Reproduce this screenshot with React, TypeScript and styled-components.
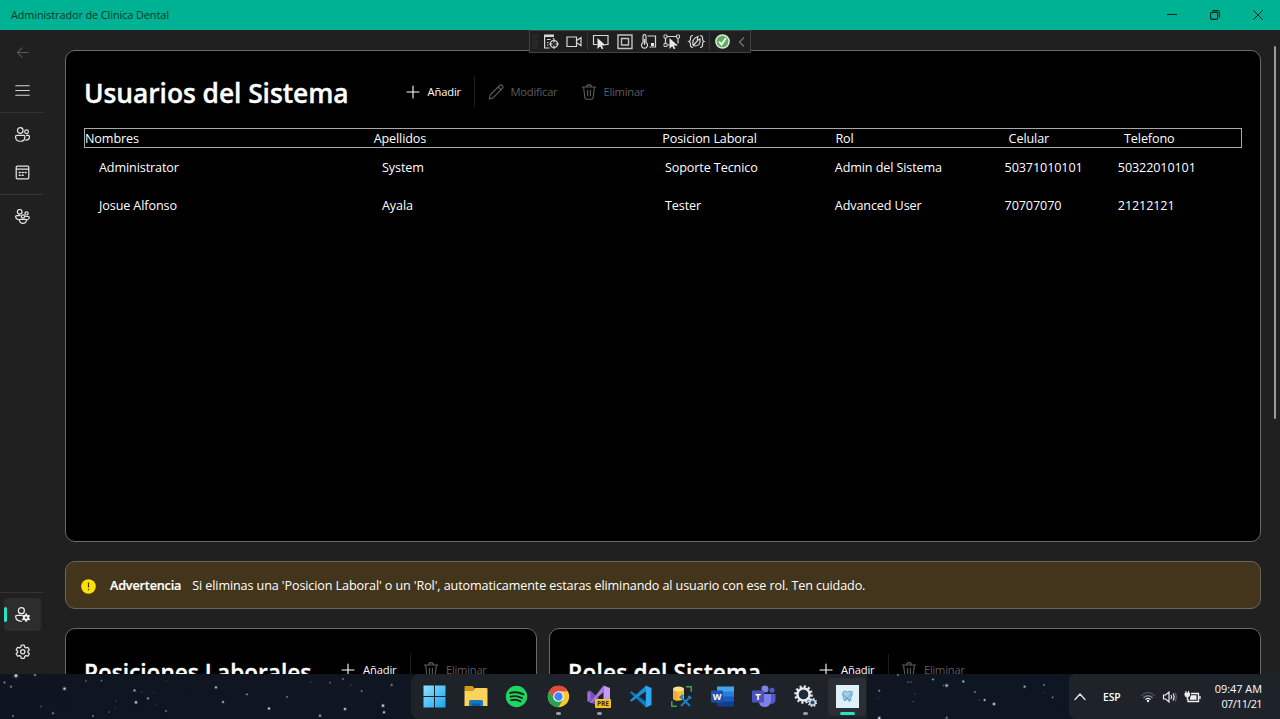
import React from "react";
import styled, { createGlobalStyle } from "styled-components";

const Global = createGlobalStyle`
  * { box-sizing: border-box; }
  html, body, #root { margin: 0; height: 100%; }
  body { overflow: hidden; background: #202020; color: #fff; font-family: "Open Sans", "Noto Sans", sans-serif; }
  svg { display: block; flex: none; }
`;

const Desktop = styled.div`
  display: flex;
  flex-direction: column;
  width: 1280px;
  height: 719px;
  overflow: hidden;
`;

const Label = styled.span<{ $size?: number; $ls?: number; $weight?: number; $color?: string }>`
  font-size: ${(p) => p.$size ?? 12.6}px;
  letter-spacing: ${(p) => p.$ls ?? -0.11}px;
  font-weight: ${(p) => p.$weight ?? 400};
  color: ${(p) => p.$color ?? "#fff"};
  line-height: 18px;
  white-space: nowrap;
`;

/* window chrome */
const TitleBar = styled.header`
  flex: none;
  height: 30px;
  display: flex;
  align-items: center;
  justify-content: space-between;
  padding-left: 11px;
  padding-right: 1px;
  background: #00b294;
`;
const WindowButtons = styled.div`
  display: flex;
`;
const WindowButton = styled.div`
  width: 43px;
  height: 30px;
  display: grid;
  place-items: center;
`;

const Body = styled.div`
  flex: 1;
  min-height: 0;
  display: flex;
  background: #202020;
`;

/* navigation */
const Sidebar = styled.nav`
  flex: none;
  width: 45px;
  display: flex;
  flex-direction: column;
  justify-content: space-between;
  border-right: 1px solid #1d1d1d;
  padding: 4px 0 3.5px;
`;
const NavGroup = styled.div`
  display: flex;
  flex-direction: column;
`;
const NavItem = styled.div<{ $active?: boolean }>`
  width: 37px;
  height: 33.5px;
  margin: 2px 4px;
  border-radius: 4px;
  display: flex;
  align-items: center;
  background: ${(p) => (p.$active ? "#2d2d2d" : "transparent")};
  svg { margin-left: ${(p) => (p.$active ? 8 : 11)}px; }
`;
const ActiveMark = styled.i`
  width: 3px;
  height: 15px;
  border-radius: 2px;
  background: #2ce0c4;
`;
const NavRule = styled.hr`
  width: 44px;
  height: 1px;
  margin: 3px 0;
  border: 0;
  background: #333;
`;

/* content */
const Content = styled.main`
  position: relative;
  flex: 1;
  min-width: 0;
  display: flex;
  flex-direction: column;
  gap: 19px;
  padding: 20px 19px 0 20px;
  overflow: hidden;
`;
const Card = styled.section<{ $height: number; $width?: number }>`
  flex: none;
  width: ${(p) => (p.$width ? p.$width + "px" : "auto")};
  height: ${(p) => p.$height}px;
  border: 1px solid #6a6a6a;
  border-radius: 10px;
  background: #000;
  padding: 24px 18px 0;
`;
const CardHeader = styled.div`
  display: flex;
  align-items: flex-start;
  height: 36px;
`;
const Title = styled.h1<{ $width: number; $size: number; $ls: number; $drop?: number }>`
  margin: 0;
  padding-top: ${(p) => p.$drop ?? 0}px;
  width: ${(p) => p.$width}px;
  font-size: ${(p) => p.$size}px;
  letter-spacing: ${(p) => p.$ls}px;
  font-weight: 600;
  -webkit-text-stroke: 0.35px #fff;
  line-height: 36px;
  white-space: nowrap;
`;
const Command = styled.div<{ $width: number; $gap?: number; $disabled?: boolean }>`
  display: flex;
  align-items: center;
  gap: ${(p) => p.$gap ?? 7}px;
  width: ${(p) => p.$width}px;
  height: 33px;
  color: ${(p) => (p.$disabled ? "#5d5d5d" : "#fff")};
  font-size: 11.2px;
  letter-spacing: ${(p) => (p.$disabled ? -0.25 : -0.15)}px;
  white-space: nowrap;
`;
const CommandRule = styled.div`
  width: 1px;
  height: 31px;
  margin: 1px 12.5px 0 0;
  background: #1f1f1f;
`;

const columns = "2.5fr 2.5fr 1.5fr 1.5fr 1fr 1fr";
const TableHead = styled.div`
  display: grid;
  grid-template-columns: ${columns};
  align-items: center;
  width: 1158px;
  height: 20px;
  margin-top: 17px;
  padding: 1px 1.5px 0 0;
  border: 1px solid #a8a8a8;
`;
const TableRow = styled.div`
  display: grid;
  grid-template-columns: ${columns};
  align-items: center;
  width: 1132px;
  height: 37.5px;
  margin-left: 15px;
  padding-top: 3px;
`;

const Alert = styled.section`
  flex: none;
  display: flex;
  align-items: center;
  height: 48px;
  padding: 2px 0 0 15px;
  border: 1px solid #6b655a;
  border-radius: 10px;
  background: #43351b;
  svg { margin-right: 14px; }
  b { margin-right: 11px; -webkit-text-stroke: 0.2px #fff; }
`;
const CardPair = styled.div`
  display: flex;
  gap: 12px;
`;
const ScrollThumb = styled.div`
  position: absolute;
  right: 4px;
  top: 16px;
  width: 2px;
  height: 373px;
  border-radius: 1px;
  background: #9b9b9b;
`;

/* debug toolbar floating over the window */
const DebugBar = styled.div`
  position: absolute;
  left: 529px;
  top: 30px;
  width: 222px;
  height: 23px;
  display: flex;
  align-items: center;
  background: #1f1f1f;
  border: 1px solid #424242;
`;

/* taskbar */
const Taskbar = styled.footer`
  position: relative;
  flex: none;
  height: 45px;
  display: flex;
  justify-content: space-between;
  background: linear-gradient(90deg, #0e1520, #101722 60%, #0b1421);
`;
const Sky = styled.svg`
  position: absolute;
  inset: 0;
`;
const Dock = styled.div`
  position: relative;
  width: 456px;
  margin-left: 411px;
  display: flex;
  align-items: stretch;
  padding-left: 2.8px;
  border-radius: 8px 0 0 8px;
  background: #1e2229;
`;
const DockItem = styled.div<{ $active?: boolean }>`
  width: 41.25px;
  display: flex;
  flex-direction: column;
  align-items: center;
  padding-top: 11px;
  gap: 4px;
  background: ${(p) => (p.$active ? "#2b2f35" : "transparent")};
  ${(p) => p.$active && "width: 38px; height: 38px; margin: 4px 0 0 2px; padding-top: 7px; border-radius: 4px;"}
`;
const Running = styled.i<{ $active?: boolean }>`
  width: ${(p) => (p.$active ? 15 : 5)}px;
  height: 2.5px;
  border-radius: 2px;
  background: ${(p) => (p.$active ? "#2ce0c4" : "#9a9da1")};
`;
const Tray = styled.div`
  position: relative;
  width: 211px;
  display: flex;
  align-items: center;
  padding-left: 5px;
  border-radius: 6px 0 0 6px;
  background: #1e2229;
`;
const Language = styled.div`
  width: 36px;
  margin-left: 17px;
  font-size: 10.4px;
  font-weight: 600;
  letter-spacing: -0.1px;
  line-height: 18px;
  padding-top: 1px;
`;
const Clock = styled.div`
  display: flex;
  flex-direction: column;
  align-items: flex-end;
  margin-left: auto;
  padding: 0 18px 1px 0;
  span { line-height: 15px; }
`;

const Stroke = ({ size = 16, w = 1.1, children, color = "currentColor", vb = 16 }: {
  size?: number; w?: number; children: React.ReactNode; color?: string; vb?: number;
}) => (
  <svg width={size} height={size} viewBox={`0 0 ${vb} ${vb}`} fill="none" stroke={color} strokeWidth={w} strokeLinecap="round" strokeLinejoin="round">
    {children}
  </svg>
);

const Plus = () => (
  <Stroke size={14} vb={14} w={1.1}><path d="M7 1v12M1 7h12" /></Stroke>
);
const Pencil = () => (
  <Stroke><path d="M1.2 15l.9-4L11.5 1.6a1.9 1.9 0 0 1 2.8 2.8L5 13.9zM10.2 3l2.800 2.800" /></Stroke>
);
const Trash = () => (
  <Stroke><path d="M1.300 3h13.400M5.700 2.900a2.300 2.300 0 0 1 4.600 0M2.600 3.100l1.300 10.900q.1 1.200 1.300 1.200h5.600q1.200 0 1.300-1.200l1.300-10.900M6.600 6.300v5.500M9.400 6.300v5.500" /></Stroke>
);
const gearPath =
  "M6.5 1.2h3l.5 2 1.3.8 2-.6 1.5 2.6-1.5 1.4v1.2l1.5 1.4-1.5 2.6-2-.6-1.3.8-.5 2h-3l-.5-2-1.3-.8-2 .6L1.2 10l1.5-1.4V7.4L1.2 6l1.5-2.6 2 .6L6 3.2z";

const header = ["Nombres", "Apellidos", "Posicion Laboral", "Rol", "Celular", "Telefono"];
const users = [
  ["Administrator", "System", "Soporte Tecnico", "Admin del Sistema", "50371010101", "50322010101"],
  ["Josue Alfonso", "Ayala", "Tester", "Advanced User", "70707070", "21212121"],
];

const stars: [number, number, number][] = [
  [16, 1.7, 1.7], [35, 1, 1], [4.5, 8.500, 0.9], [11, 12.700, 0.9], [64.500, 14.700, 1.4], [86, 7, 0.7], [101.500, 6.600, 0.7],
  [134.500, 16.400, 1.1], [141.500, 18, 0.5], [136, 28.400, 1.3], [148, 24.400, 1], [154, 19, 0.4], [116, 27, 0.5], [156, 31, 0.4],
  [166, 37, 0.8], [53, 39.300, 0.9], [41, 32.500, 0.6], [13, 42, 0.8], [93, 42, 0.8], [109, 38, 0.6], [115, 34, 0.4],
  [216, 13.400, 1.2], [223, 28, 1.1], [247, 20.400, 0.9], [269, 34.500, 1.3], [287, 23, 0.8], [320, 41.700, 1.1], [330, 8.700, 0.7],
  [311, 8, 0.5], [343, 5, 0.8], [351, 11, 0.5], [361.700, 17, 0.8], [391.700, 11, 0.9], [345, 35, 1.3], [383, 31.700, 1.4],
  [384, 38.300, 1.2], [166, 7, 0.4], [190, 20, 0.3], [304, 19, 0.3], [898, 1, 0.8], [908, 8, 0.7], [911, 8, 0.6], [933, 5.500, 0.9],
  [943.500, 11.500, 0.6], [946.700, 11.500, 1.4], [963.300, 7.500, 1.1], [975, 18, 0.8], [979, 26, 0.5], [984.600, 26, 1.1],
  [994, 30, 1.4], [1024.600, 12.700, 1.1], [1044, 11, 0.8], [1052.700, 23.300, 0.8], [1044, 18.500, 0.4], [1063, 34, 0.3],
  [879.300, 16.700, 0.9], [878, 24, 0.4], [879.300, 44, 1.4], [946.700, 43.700, 0.9], [915, 20, 0.5], [913, 27.500, 0.5],
];

const Commands = ({ full }: { full?: boolean }) => (
  <>
    <Command $width={68.5} $gap={8}><Plus />Añadir</Command>
    <CommandRule />
    {full && <Command $width={93} $disabled><Pencil />Modificar</Command>}
    <Command $width={80} $disabled><Trash />Eliminar</Command>
  </>
);

const DebugTools = () => (
  <DebugBar>
    <svg width="220" height="21" viewBox="0 0 220 21" fill="none" stroke="#d8d8d8" strokeWidth="1.2">
      <path d="M3 4v14M5 5v13M7 4v14" stroke="#484848" strokeDasharray="1 1.5" strokeWidth="1" />
      <path d="M57.500 2v17M179.500 2v17" stroke="#363636" />
      <path d="M14.600 5.500h9M14.600 4v13h5M17 8.500h3.500M17 11.500h1.500M17 14h1.500M23.500 7v1" />
      <path d="M14 4.600h10" strokeWidth="2.200" />
      <circle cx="24" cy="13" r="3.500" />
      <path d="M24 8v3.500M24 14.500V18M19 13h3.500M25.500 13H29" />
      <path d="M37 6h9.500v9.500H37zM47 9.300l4-2.600v8l-4-2.600" />
      <path d="M67 13.500h-3.500v-9h14.500v9h-3" />
      <path d="M67.500 7v11l2.700-2.700 1.600 3 1.500-.8-1.500-2.900h3.900z" fill="#e8e8e8" stroke="none" />
      <path d="M88 4h14v13.500H88zM91.500 7.500h7v6.500h-7z" stroke="#c4c4c4" strokeWidth="1.400" />
      <path d="M113 5.500q0-1.800 1.500-1.800t1.500 1.800v6a3 3 0 1 1-3 0zM114.500 8v6M117.500 5h8v11h-6" />
      <path d="M121 12h3v3h-3z" fill="#e8e8e8" stroke="none" />
      <path d="M137 5.500h10M137 14h2.500M145.500 14h1.500M135.500 7v5.500M148 7v5.500" />
      <path d="M134 4h3v3h-3zM146.500 4h3v3h-3zM134 12.500h3v3h-3z" strokeWidth=".9" />
      <path d="M139.500 7v11l2.700-2.700 1.600 3 1.500-.8-1.500-2.900h3.900z" fill="#e8e8e8" stroke="none" />
      <path d="M163 4.500q-3 0-2.500 3.500 0 2-1.500 2.500 1.500.5 1.500 2.500-.5 3.500 2.500 3.500M170 4.500q3 0 2.500 3.500 0 2 1.500 2.500-1.500.5-1.500 2.500.5 3.500-2.500 3.500M163 14q-1.500-6 5-8.500-2 5 2 2.500 1 7-5.500 7zM163 15l5-6" />
      <circle cx="192.500" cy="10.500" r="6.600" fill="#5fae63" stroke="#d8eed8" strokeWidth="1.500" />
      <path d="M189 10.500l2.500 3 4.500-6.500" stroke="#fff" strokeWidth="1.800" />
      <path d="M214 6.500l-4.500 4.500 4.500 4.500" stroke="#777" />
    </svg>
  </DebugBar>
);

const dock: { icon: React.ReactNode; running?: boolean }[] = [
  {
    icon: (
      <svg width="23" height="23" viewBox="0 0 23 23">
        <defs><linearGradient id="win" x1="0" y1="0" x2="1" y2="1"><stop stopColor="#8fe3ff" /><stop offset="1" stopColor="#1aa3f0" /></linearGradient></defs>
        <path fill="url(#win)" d="M.5.500h10.500V11H.5zM12 .5h10.500V11H12zM.5 12h10.500v10.500H.5zM12 12h10.500v10.500H12z" />
      </svg>
    ),
  },
  {
    icon: (
      <svg width="24" height="23" viewBox="0 0 24 23">
        <path d="M.5 2q0-1 1-1h7l2 2.500-1.500 2H.5z" fill="#d99a10" />
        <path d="M.5 5.500H9l2-2.500h11.500q1 0 1 1V21H.5z" fill="#fbd25a" />
        <path d="M5 21v-4.500q0-1.500 1.500-1.500h11q1.500 0 1.500 1.500V21z" fill="#1678be" />
        <path d="M8 18.500h8V21H8z" fill="#0e5c9b" />
      </svg>
    ),
  },
  {
    icon: (
      <svg width="23" height="23" viewBox="0 0 23 23">
        <circle cx="11.500" cy="11.500" r="10.700" fill="#1fd760" />
        <path d="M5 8q7-2 13.500 1.400M5.600 11.700q6-1.600 11.400 1.300M6.200 15.200q5-1.200 9.300 1.100" fill="none" stroke="#16241c" strokeWidth="1.900" strokeLinecap="round" />
      </svg>
    ),
  },
  {
    running: true,
    icon: (
      <svg width="23" height="23" viewBox="0 0 23 23">
        <circle cx="11.500" cy="11.500" r="10.700" fill="#fcc934" />
        <path d="M2.230 6.150A10.700 10.700 0 0 1 20.770 6.150H11.500L6.870 14.170z" fill="#e04a3d" />
        <path d="M2.230 6.150A10.700 10.700 0 0 0 11.500 22.200L16.130 14.170 6.870 14.170z" fill="#27a350" />
        <circle cx="11.500" cy="11.500" r="5.300" fill="#fff" />
        <circle cx="11.500" cy="11.500" r="4.200" fill="#4285f4" />
      </svg>
    ),
  },
  {
    running: true,
    icon: (
      <svg width="24" height="23" viewBox="0 0 24 23">
        <path d="M.5 6.500l2.500-1.300L18 19l-1 3.500L3 17.500l-2.500-1z" fill="#7a4fb5" />
        <path d="M.5 16.500v-10l3 1.500v7z" fill="#9a6fd6" />
        <path d="M3 17.800L16.500.5v6.500L4.500 18z" fill="#a77be0" />
        <path d="M16.500.500L23 3v16l-6.500 3.500z" fill="#c79bf5" />
        <rect x="8" y="14" width="16" height="9" rx="1" fill="#fbbf24" />
        <text x="16" y="21" textAnchor="middle" fontSize="6.500" fontWeight="700" fill="#3b2a05" fontFamily="Open Sans, sans-serif">PRE</text>
      </svg>
    ),
  },
  {
    icon: (
      <svg width="23" height="23" viewBox="0 0 23 23">
        <path d="M.8 7.600l1.700-1.300L18 17.500V22L16.800 22.300z" fill="#0f79bd" />
        <path d="M.8 15.500l1.700 1.300L18 5.500V1l-1.200-.3z" fill="#1b8fd6" />
        <path d="M16.800.500L22.500 3v17l-5.700 2.500z" fill="#2ba8ef" />
      </svg>
    ),
  },
  {
    icon: (
      <svg width="23" height="23" viewBox="0 0 23 23" fill="none">
        <path d="M3 4v10q5 3.500 11 0V4z" fill="#f9c02c" /><path d="M3 4v10q2 1.500 4 2V4z" fill="#f3a93c" />
        <ellipse cx="8.500" cy="4" rx="5.500" ry="2.600" fill="#fde08a" />
        <path d="M16 1.800h5.200V7M1.800 16v5.200H7" stroke="#3ba650" strokeWidth="1.500" />
        <path d="M11 12l9 9M20 12l-9 9" stroke="#1d7fc4" strokeWidth="2" />
        <path d="M10 13l3-3M18.500 11l2.500 2.500" stroke="#1d7fc4" strokeWidth="2.400" />
      </svg>
    ),
  },
  {
    icon: (
      <svg width="24" height="23" viewBox="0 0 24 23">
        <path d="M6 1.500h17v5.500H6z" fill="#41a5ee" /><path d="M6 6.500h17V12H6z" fill="#2b7cd3" /><path d="M6 11.500h17V17H6z" fill="#185abd" /><path d="M6 16.500h17V21.500H6z" fill="#103f91" />
        <rect y="5.500" width="12" height="12" rx="1" fill="#1a52b0" />
        <text x="6" y="15" textAnchor="middle" fontSize="9" fontWeight="700" fill="#fff" fontFamily="Open Sans, sans-serif">W</text>
      </svg>
    ),
  },
  {
    icon: (
      <svg width="24" height="23" viewBox="0 0 24 23">
        <circle cx="20" cy="5.300" r="2.500" fill="#5059c9" /><circle cx="13" cy="4" r="3.500" fill="#7b83eb" />
        <path d="M16 9h7.500v6.500q-1 4-5 3.500z" fill="#5059c9" />
        <path d="M7 9h12v7q-1 6-6.500 6T7 16z" fill="#7b83eb" />
        <rect y="5.500" width="12" height="12" rx="1" fill="#4b53bc" />
        <text x="6" y="15" textAnchor="middle" fontSize="9.500" fontWeight="700" fill="#fff" fontFamily="Open Sans, sans-serif">T</text>
      </svg>
    ),
  },
  {
    running: true,
    icon: (
      <svg width="23" height="23" viewBox="0 0 23 23" fill="none">
        <circle cx="9.500" cy="9.500" r="8" stroke="#e2e8ec" strokeWidth="2.600" strokeDasharray="2.100 2.090" />
        <circle cx="9.500" cy="9.500" r="6" stroke="#e6ebef" strokeWidth="2.600" />
        <circle cx="9.500" cy="9.500" r="4.700" fill="#1f2c38" />
        <circle cx="18.500" cy="17.500" r="4" stroke="#c9d4dc" strokeWidth="1.500" strokeDasharray="1.570 1.570" />
        <circle cx="18.500" cy="17.500" r="2.800" fill="#23506f" stroke="#d6dee4" strokeWidth="1.500" />
      </svg>
    ),
  },
];

export default function App() {
  return (
    <Desktop>
      <Global />
      <TitleBar>
        <Label $size={10.8} $ls={-0.05} $color="#05352d">Administrador de Clinica Dental</Label>
        <WindowButtons>
          <WindowButton><Stroke size={10} vb={10} w={1.2} color="#06231e"><path d="M.5 4.500h9" /></Stroke></WindowButton>
          <WindowButton><Stroke size={10} vb={10} w={1.1} color="#06231e"><rect x=".6" y="2.400" width="7" height="7" rx="1.300" /><path d="M2.800.600h4.600q2 0 2 2v4.600" /></Stroke></WindowButton>
          <WindowButton><Stroke size={10} vb={10} w={1} color="#06231e"><path d="M.5.500l9 9M9.500.500l-9 9" /></Stroke></WindowButton>
        </WindowButtons>
      </TitleBar>

      <Body>
        <Sidebar>
          <NavGroup>
            <NavItem><Stroke size={15} color="#5c5c5c"><path d="M14 8H2.500M7.500 3L2.500 8l5 5" /></Stroke></NavItem>
            <NavItem><Stroke size={15} color="#d6d6d6"><path d="M.8 3h14.400M.8 8h14.400M.8 13h14.400" /></Stroke></NavItem>
            <NavRule />
            <NavItem>
              <Stroke size={15} color="#e4e4e4" w={1.300}><circle cx="5.600" cy="3.700" r="3" /><circle cx="12.300" cy="5" r="2" /><path d="M2 9h7.300q1.300 0 1.300 1.300 0 4.900-5 4.900t-5-4.900Q.6 9 2 9zM12.300 9H14q1.400 0 1.400 1.400 0 3.600-3.900 3.600" /></Stroke>
            </NavItem>
            <NavItem>
              <Stroke size={15} color="#e4e4e4" w={1.300}><rect x="1.300" y="1.300" width="13.400" height="13.400" rx="1" /><path d="M1.500 4.500h13" /><path d="M4.500 8h1M7.700 8h1M10.800 8h1M4.500 11h1M7.700 11h1" strokeWidth="1.600" /></Stroke>
            </NavItem>
            <NavRule />
            <NavItem>
              <Stroke size={15} color="#e4e4e4" w={1.300}><circle cx="5" cy="3" r="2.500" /><circle cx="12.300" cy="4.700" r="1.700" /><circle cx="8.500" cy="8" r="1.700" /><path d="M5.500 7H1.700Q.7 7 .7 8q.2 3 3 3.300M11.500 8h2.800q1 0 1 1-.2 2-2.300 2.500M5.500 11h6q.8 0 .8 1-.4 3.300-3.800 3.300T4.700 12q0-1 .8-1z" /></Stroke>
            </NavItem>
          </NavGroup>
          <NavGroup>
            <NavRule />
            <NavItem $active>
              <ActiveMark />
              <Stroke size={15} color="#efefef" w={1.300}><circle cx="6.800" cy="3.900" r="3.200" /><path d="M7 9H2.200Q.7 9 .7 10.300q.3 4.700 6.300 4.900" /><circle cx="11.800" cy="11.300" r="2.300" strokeWidth="2" /><path d="M11.800 7.500v1M11.800 14v1M8.500 9.400l.9.500M14.200 12.700l.9.500M8.500 13.200l.9-.5M14.200 9.900l.9-.5" strokeWidth="1.900" /></Stroke>
            </NavItem>
            <NavItem><Stroke size={15.500} color="#e4e4e4" w={1.300}><path d={gearPath} /><circle cx="8" cy="8" r="2.200" /></Stroke></NavItem>
          </NavGroup>
        </Sidebar>

        <Content>
          <Card $height={492}>
            <CardHeader>
              <Title $width={321.500} $size={26.4} $ls={-0.06}>Usuarios del Sistema</Title>
              <Commands full />
            </CardHeader>
            <TableHead>{header.map((h) => <Label key={h}>{h}</Label>)}</TableHead>
            {users.map((u) => (
              <TableRow key={u[0]}>{u.map((v) => <Label key={v}>{v}</Label>)}</TableRow>
            ))}
          </Card>

          <Alert>
            <svg width="15" height="15" viewBox="0 0 15 15"><circle cx="7.500" cy="7.500" r="7.300" fill="#fce100" /><path d="M7.500 3.500v5M7.500 10v1.300" stroke="#37300c" strokeWidth="1.200" /></svg>
            <Label as="b" $weight={600} $ls={-0.15}>Advertencia</Label>
            <Label>Si eliminas una 'Posicion Laboral' o un 'Rol', automaticamente estaras eliminando al usuario con ese rol. Ten cuidado.</Label>
          </Alert>

          <CardPair>
            <Card $height={300} $width={472}>
              <CardHeader><Title $width={257} $size={22.6} $ls={0.02} $drop={2}>Posiciones Laborales</Title><Commands /></CardHeader>
            </Card>
            <Card $height={300} $width={712}>
              <CardHeader><Title $width={251} $size={22.6} $ls={0.18} $drop={2}>Roles del Sistema</Title><Commands /></CardHeader>
            </Card>
          </CardPair>
          <ScrollThumb />
        </Content>
      </Body>

      <Taskbar>
        <Sky width="1280" height="45">
          {stars.map(([x, y, r], i) => (
            <g key={i} fill="#c3d8e8"><circle cx={x} cy={y} r={r * 1.6} opacity=".2" /><circle cx={x} cy={y} r={r * 0.8} opacity={Math.min(1, r * 0.75)} /></g>
          ))}
        </Sky>
        <Dock>
          {dock.map((d, i) => (
            <DockItem key={i}>{d.icon}{d.running && <Running />}</DockItem>
          ))}
          <DockItem $active>
            <svg width="23" height="23" viewBox="0 0 23 23" fill="none">
              <rect width="23" height="23" fill="#dff0fb" />
              <path d="M7.500 6.500q2-1 4 .5Q14.500 5 16 7.500q1 2.500-1 5-.5 4-1.800 4t-1.400-3.500q-.8-1-1.300 0-.5 3.500-1.600 3-1.500-1-1.500-4-1.800-3 .1-5.500z" fill="#9fcfe8" stroke="#5d9cc0" strokeWidth=".8" />
              <path d="M6.500 9q4.500 5.500 9 6.500M16.500 6q-2 5-8 9.500" stroke="#4d8fb5" strokeWidth=".7" />
            </svg>
            <Running $active />
          </DockItem>
        </Dock>
        <Tray>
          <Stroke size={12} vb={12} w={1.300} color="#e6e6e6"><path d="M1 8.500l5-5.500 5 5.500" /></Stroke>
          <Language>ESP</Language>
          <svg width="64" height="18" viewBox="0 0 64 18" fill="none" stroke="#eee" strokeWidth="1.200">
            <path d="M2 8q7-7 14 0" stroke="#4a4e54" />
            <path d="M4.300 10q4.700-4.500 9.400 0" stroke="#7b7e83" />
            <path d="M6.500 11.700q2.500-2.500 5 0" />
            <circle cx="9" cy="13" r="1.200" fill="#eee" stroke="none" />
            <path d="M24.500 7h2.200L30 4v10l-3.300-3h-2.200zM32 7q1.300 2 0 4M34 5.500q2.200 3.500 0 7" />
            <path d="M36 4.500q2.600 4.500 0 9" stroke="#5c6066" />
            <path d="M52 5.500h7.500v8H49v-3M61 8v3" strokeWidth="1.300" />
            <path d="M52 7.300h5.500v4.500H51v-2z" fill="#eee" stroke="none" />
            <path d="M46 5h4.500v2q0 2-2.200 2T46 7zM47 3v2M49.600 3v2M48.300 9v3" fill="#eee" strokeWidth="1" />
          </svg>
          <Clock><Label $size={10.900} $ls={0}>09:47 AM</Label><Label $size={10.900} $ls={-0.6}>07/11/21</Label></Clock>
        </Tray>
      </Taskbar>
      <DebugTools />
    </Desktop>
  );
}
